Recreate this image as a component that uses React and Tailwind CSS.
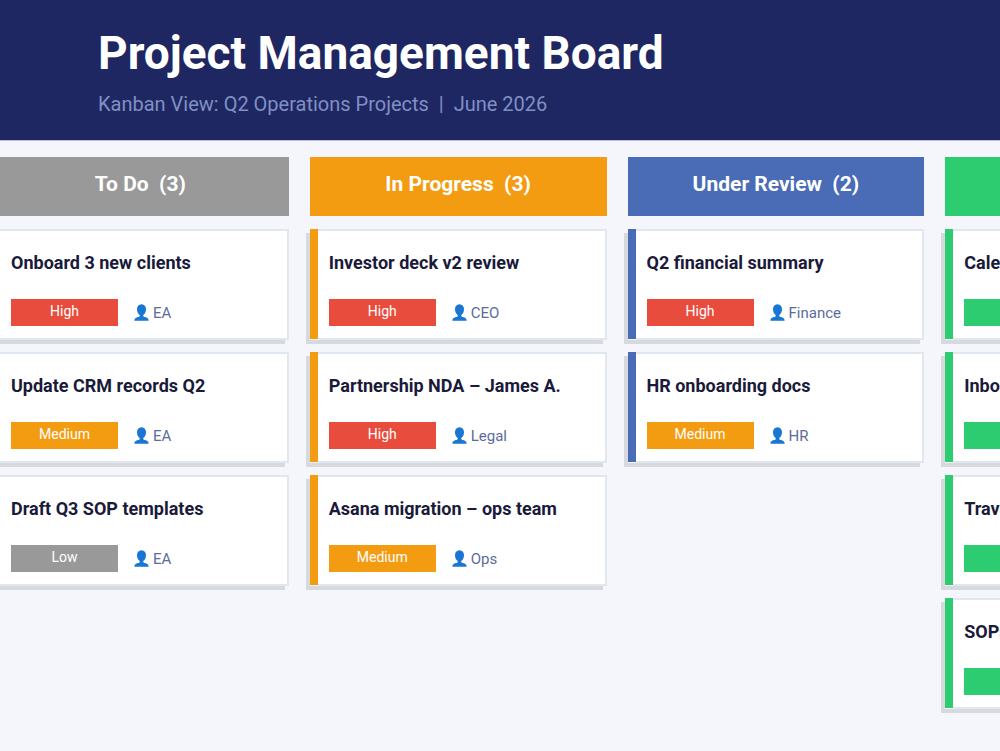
const COLUMNS = [
  {
    title: "To Do",
    color: "bg-[#999999]",
    cards: [
      { title: "Onboard 3 new clients", tag: "High", owner: "EA" },
      { title: "Update CRM records Q2", tag: "Medium", owner: "EA" },
      { title: "Draft Q3 SOP templates", tag: "Low", owner: "EA" },
    ],
  },
  {
    title: "In Progress",
    color: "bg-[#f39c12]",
    cards: [
      { title: "Investor deck v2 review", tag: "High", owner: "CEO" },
      { title: "Partnership NDA – James A.", tag: "High", owner: "Legal" },
      { title: "Asana migration – ops team", tag: "Medium", owner: "Ops" },
    ],
  },
  {
    title: "Under Review",
    color: "bg-[#4a6cb6]",
    cards: [
      { title: "Q2 financial summary", tag: "High", owner: "Finance" },
      { title: "HR onboarding docs", tag: "Medium", owner: "HR" },
    ],
  },
  {
    title: "Done",
    color: "bg-[#2ecc71]",
    cards: [
      { title: "Calendar", tag: "Done", owner: "EA" },
      { title: "Inbox", tag: "Done", owner: "EA" },
      { title: "Travel", tag: "Done", owner: "EA" },
      { title: "SOPs", tag: "Done", owner: "EA" },
    ],
  },
];

const TAG_COLORS = {
  High: "bg-[#e84c3d]",
  Medium: "bg-[#f39c12]",
  Low: "bg-[#999999]",
  Done: "bg-[#2ecc71]",
};

function PersonIcon() {
  return (
    <svg viewBox="0 0 16 18" className="h-[17px] w-[15px]" aria-hidden="true">
      <path
        fill="#1976d2"
        d="M8 .3C4.900.3 3.200 2.600 3.200 5.600c0 2.700 1.200 5 2.900 6.100v1.200c-.4.600-1.500.800-2.700 1.200C1.500 14.700.5 15.500.4 17.700h15.200c-.1-2.200-1.100-3-3-3.600-1.200-.4-2.300-.6-2.700-1.200v-1.200c1.700-1.100 2.900-3.400 2.900-6.100C12.800 2.600 11.100.3 8 .3Z"
      />
    </svg>
  );
}

function Card({ card, color }) {
  return (
    <li className="flex h-[111px] shadow-[-4px_4px_0_#d6d9dd]">
      <div className={`mb-px w-2 shrink-0 ${color}`} />
      <article className="min-w-0 flex-1 border-y-2 border-r-2 border-[#e1e7ef] bg-white pt-5 pl-[11px]">
        <h3 className="truncate text-[18px] leading-6 font-bold text-[#1a1a3a]">{card.title}</h3>
        <div className="mt-6 flex items-center">
          <span
            className={`h-[27px] w-[107px] shrink-0 text-center text-[14px] leading-[25px] text-white ${TAG_COLORS[card.tag]}`}
          >
            {card.tag}
          </span>
          <span className="ml-4 flex items-center gap-1 text-[15px] leading-6 text-[#5b6c9c]">
            <PersonIcon />
            {card.owner}
          </span>
        </div>
      </article>
    </li>
  );
}

export default function App() {
  return (
    <div className="min-h-screen overflow-hidden bg-[#f4f6fb] font-['Roboto',sans-serif]">
      <header className="border-b border-[#b9c0de] bg-[#1e2761] pt-6 pb-[22px] pl-[98px]">
        <h1 className="text-[46px] leading-[58px] font-bold text-white">Project Management Board</h1>
        <p className="mt-2 text-[20px] leading-7 whitespace-pre text-[#8090c4]">
          {"Kanban View: Q2 Operations Projects  |  June 2026"}
        </p>
      </header>
      <main className="-ml-2 grid w-[125%] grid-cols-4 gap-[21px] pt-4">
        {COLUMNS.map((col) => (
          <section key={col.title}>
            <h2
              className={`h-[59px] text-center text-[21px] leading-[54px] font-bold whitespace-pre text-white ${col.color}`}
            >
              {`${col.title}  (${col.cards.length})`}
            </h2>
            <ul className="mt-[13px] flex flex-col gap-3">
              {col.cards.map((card) => (
                <Card key={card.title} card={card} color={col.color} />
              ))}
            </ul>
          </section>
        ))}
      </main>
    </div>
  );
}
